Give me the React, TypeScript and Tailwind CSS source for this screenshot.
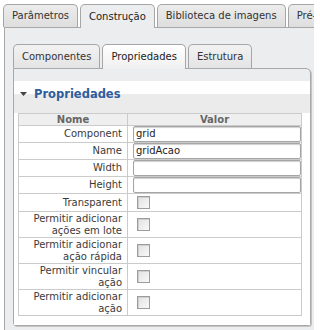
import React from "react";

function OuterTab({ label, active }: { label: string; active?: boolean }) {
  return (
    <div
      className={
        active
          ? "h-[24px] flex items-center px-[8px] border border-b-0 border-[#a6a6a6] rounded-t-[5px] bg-[#ecedee] text-[#222]"
          : "h-[23px] mb-px flex items-center px-[8px] border border-b-0 border-[#a6a6a6] rounded-t-[5px] bg-gradient-to-b from-[#ececec] to-[#dedede] text-[#333]"
      }
    >
      {label}
    </div>
  );
}

function InnerTab({ label, active }: { label: string; active?: boolean }) {
  return (
    <div
      className={
        active
          ? "h-[25px] flex items-center px-[8px] border border-b-0 border-[#a6a6a6] rounded-t-[5px] bg-gradient-to-b from-[#ffffff] to-[#f0f0f0] text-[#222]"
          : "h-[24px] mb-px flex items-center px-[8px] border border-b-0 border-[#a6a6a6] rounded-t-[5px] bg-gradient-to-b from-[#f2f2f2] to-[#e4e4e4] text-[#333]"
      }
    >
      {label}
    </div>
  );
}

function Checkbox() {
  return (
    <span className="block w-[13px] h-[13px] border border-[#9c9c9c] bg-gradient-to-br from-[#e2e2e2] to-[#f8f8f8] shadow-[inset_1px_1px_0_#cfcfcf]" />
  );
}

const textRows = [
  { label: "Component", value: "grid" },
  { label: "Name", value: "gridAcao" },
  { label: "Width", value: "" },
  { label: "Height", value: "" },
];

const checkRows = [
  ["Permitir adicionar", "ações em lote"],
  ["Permitir adicionar", "ação rápida"],
  ["Permitir vincular", "ação"],
  ["Permitir adicionar", "ação"],
];

export default function App() {
  return (
    <div className="w-[314px] h-[330px] overflow-hidden bg-white font-['DejaVu_Sans',sans-serif] text-[10px] leading-[12px] text-[#3a3a3a]">
      <div className="relative z-10 h-[28px] pt-[4px] pl-[3px] flex items-end gap-[2px] whitespace-nowrap overflow-hidden">
        <OuterTab label="Parâmetros" />
        <OuterTab label="Construção" active />
        <OuterTab label="Biblioteca de imagens" />
        <OuterTab label="Pré-visualização" />
      </div>
      <div className="-mt-px ml-[4px] h-[310px] border-l border-t border-[#a8a8a8] bg-[#ecedee] pt-[16px] pl-[8px]">
        <div className="relative z-10 h-[25px] flex items-end gap-[2px] whitespace-nowrap">
          <InnerTab label="Componentes" />
          <InnerTab label="Propriedades" active />
          <InnerTab label="Estrutura" />
        </div>
        <div className="-mt-px w-[298px] border border-[#a9a9a9] rounded-tr-[5px] rounded-b-[3px] bg-[#ecedee] pt-[12px] shadow-[1px_1px_0_#c4c4c4]">
          <div className="bg-white pb-[9px]">
            <div className="h-[32px] flex items-start pt-[6px] pl-[6px] bg-[linear-gradient(to_bottom,#ffffff_0%,#ffffff_41%,#ebebeb_41%,#ebebeb_100%)]">
              <svg width="7" height="12" viewBox="0 0 7 12" className="mt-[1px]">
                <path d="M0 4 L7 4 L3.5 8 Z" fill="#444" />
              </svg>
              <span className="ml-[7px] text-[11.5px] leading-[14px] font-bold text-[#2e5d9c]">
                Propriedades
              </span>
            </div>
            <div className="pl-[4px]">
              <table className="w-[284px] table-fixed border-collapse">
                <colgroup>
                  <col className="w-[109px]" />
                  <col />
                </colgroup>
                <thead>
                  <tr>
                    <th className="h-[12px] p-0 border border-[#cbcbcb] bg-[#efefef] font-bold text-[#666] leading-[11px] text-center">
                      Nome
                    </th>
                    <th className="h-[12px] p-0 border border-[#cbcbcb] bg-[#efefef] font-bold text-[#666] leading-[11px] text-center">
                      Valor
                    </th>
                  </tr>
                </thead>
                <tbody>
                  {textRows.map((r) => (
                    <tr key={r.label}>
                      <td className="h-[17px] p-0 pr-[5px] border border-[#cbcbcb] text-right">
                        {r.label}
                      </td>
                      <td className="h-[17px] p-0 pl-[5px] border border-[#cbcbcb]">
                        <div className="w-[168px] h-[16px] border border-[#a5a5a5] rounded-[2px] shadow-[inset_0_1px_1px_#d0d0d0] bg-white px-[2px] flex items-center text-[#222]">
                          {r.value}
                        </div>
                      </td>
                    </tr>
                  ))}
                  <tr>
                    <td className="h-[18px] p-0 pr-[5px] border border-[#cbcbcb] text-right">
                      Transparent
                    </td>
                    <td className="h-[18px] p-0 pl-[9px] border border-[#cbcbcb]">
                      <Checkbox />
                    </td>
                  </tr>
                  {checkRows.map((r, i) => (
                    <tr key={i}>
                      <td className="h-[26px] p-0 pr-[5px] border border-[#cbcbcb] text-right">
                        {r[0]}
                        <br />
                        {r[1]}
                      </td>
                      <td className="h-[26px] p-0 pl-[9px] border border-[#cbcbcb]">
                        <Checkbox />
                      </td>
                    </tr>
                  ))}
                </tbody>
              </table>
            </div>
          </div>
        </div>
      </div>
    </div>
  );
}
